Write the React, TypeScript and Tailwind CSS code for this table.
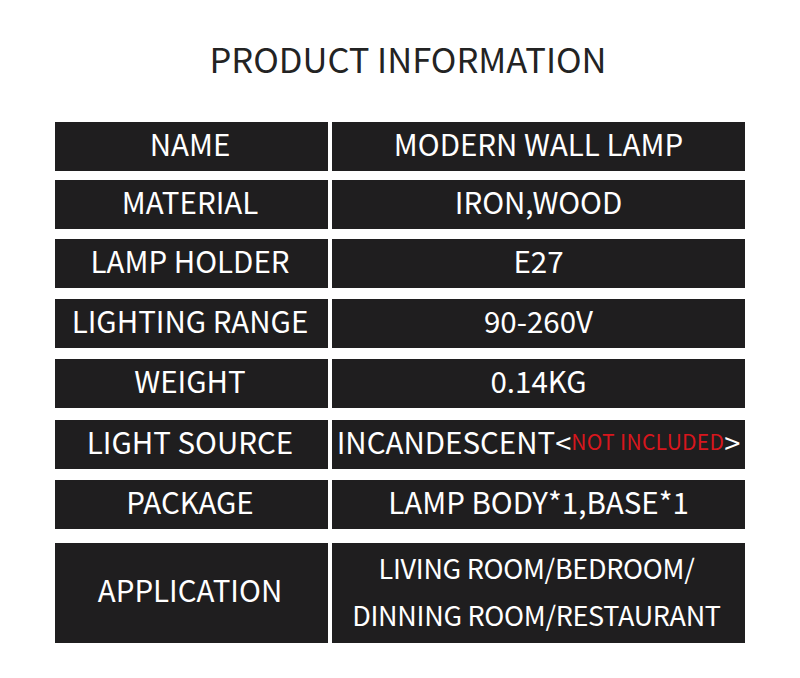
import React from "react";

const rows: { label: string; value: React.ReactNode; mt: string }[] = [
  { label: "NAME", value: "MODERN WALL LAMP", mt: "mt-0" },
  { label: "MATERIAL", value: "IRON,WOOD", mt: "mt-[9px]" },
  { label: "LAMP HOLDER", value: "E27", mt: "mt-[10px]" },
  { label: "LIGHTING RANGE", value: "90-260V", mt: "mt-[11px]" },
  { label: "WEIGHT", value: "0.14KG", mt: "mt-[11px]" },
  {
    label: "LIGHT SOURCE",
    value: (
      <span className="flex items-center whitespace-nowrap">
        <span>INCANDESCENT</span>
        <span className="text-[29px]">&lt;</span>
        <span className="text-[21px] tracking-[0.3px] text-[#d8161d]">NOT INCLUDED</span>
        <span className="text-[29px]">&gt;</span>
      </span>
    ),
    mt: "mt-[12px]",
  },
  { label: "PACKAGE", value: "LAMP BODY*1,BASE*1", mt: "mt-[11px]" },
];

const cell =
  "bg-[#1f1e1f] flex items-center justify-center text-white text-[29.5px] leading-none pb-[6px]";

export default function App() {
  return (
    <div
      className="w-[800px] h-[678px] bg-white overflow-hidden"
      style={{ fontFamily: '"Noto Sans CJK SC", "Noto Sans", sans-serif' }}
    >
      <div className="pt-[33px] pl-[16px] flex justify-center">
        <h1 className="text-[34.5px] leading-[50px] text-[#232323] font-normal">
          PRODUCT INFORMATION
        </h1>
      </div>
      <div className="mt-[39px] ml-[55px] w-[690px] flex flex-col">
        {rows.map((r) => (
          <div key={r.label} className={`flex gap-[4px] h-[49px] ${r.mt}`}>
            <div className={`w-[273px] pr-[3px] ${cell}`}>{r.label}</div>
            <div className={`flex-1 ${cell}`}>{r.value}</div>
          </div>
        ))}
        <div className="flex gap-[4px] mt-[14px] h-[100px]">
          <div className={`w-[273px] pr-[3px] ${cell}`}>APPLICATION</div>
          <div className="flex-1 bg-[#1f1e1f] flex flex-col items-center justify-center text-white text-[27px] leading-[47px] tracking-[-0.3px] pb-[4px] pr-[4px]">
            <span className="whitespace-nowrap">LIVING ROOM/BEDROOM/</span>
            <span className="whitespace-nowrap">DINNING ROOM/RESTAURANT</span>
          </div>
        </div>
      </div>
    </div>
  );
}
